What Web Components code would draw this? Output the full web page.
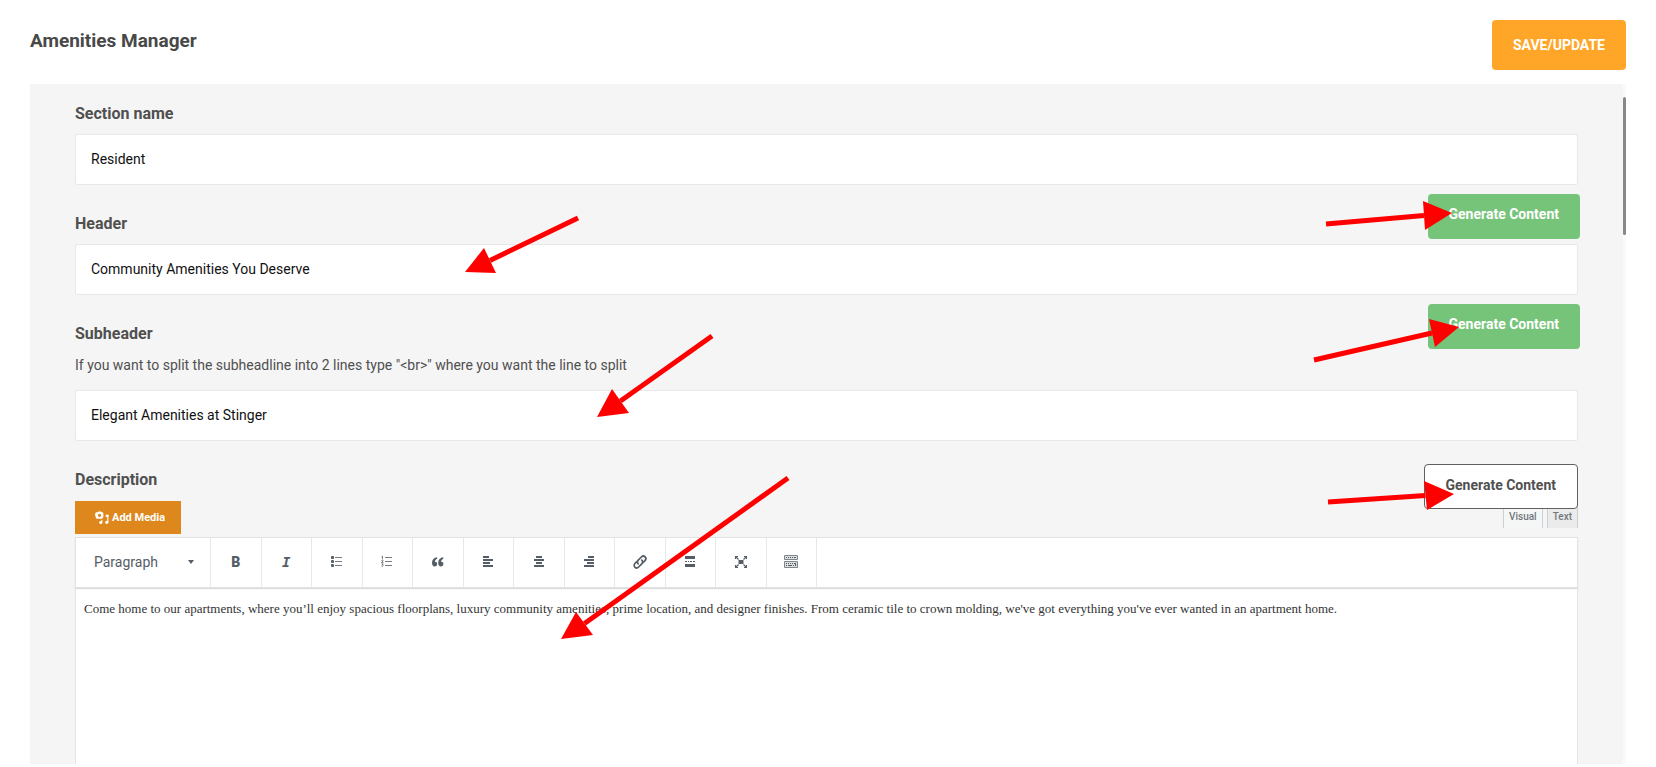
<!DOCTYPE html>
<html lang="en">
<head>
<meta charset="utf-8">
<title>Amenities Manager</title>
<style>
  body {
    margin: 0;
    background: #fff;
    color: #505050;
    font: 14px/20px Roboto, "Liberation Sans", sans-serif;
  }
</style>
</head>
<body>
<amenities-page></amenities-page>

<script>
const ICONS = {
  ul: `<g fill="currentColor"><rect x="4" y="4" width="3" height="3" rx="1"/><rect x="4" y="8" width="3" height="3" rx="1"/><rect x="4" y="12" width="3" height="3" rx="1"/>
    <path opacity=".8" d="M8 5h7v1H8zM8 9h7v1H8zM8 13h7v1H8z"/></g>`,
  ol: `<path fill="currentColor" opacity=".8" d="M8 5h7v1H8zM8 9h7v1H8zM8 13h7v1H8z"/>
    <path fill="none" stroke="currentColor" stroke-width=".8" d="M4.5 4.8l1-.6v3M4.5 8.6c.2-.7 1.8-.7 1.6.2L4.5 10.6h2M4.5 12h1.7l-.8 1c1.2.2.9 1.6-.9 1.3"/>`,
  quote: `<path fill="currentColor" d="M9 5.2C6 5.500 4 7.500 4 10.800c0 2.200 1 3.700 2.700 3.700 1.500 0 2.500-1 2.500-2.500 0-1.400-.9-2.300-2.300-2.300.1-1.300.9-2.400 2.300-3zM15.200 5.200c-3 .3-5 2.300-5 5.600 0 2.200 1 3.700 2.700 3.700 1.500 0 2.500-1 2.500-2.500 0-1.400-.9-2.300-2.300-2.300.1-1.300.9-2.400 2.300-3z"/>`,
  left: `<path fill="currentColor" d="M5 4h6v2H5zM5 7h10v2H5zM5 10h7v2H5zM5 13h10v2H5z"/>`,
  center: `<path fill="currentColor" d="M7 4h6v2H7zM5 7h10v2H5zM7 10h6v2H7zM5 13h10v2H5z"/>`,
  right: `<path fill="currentColor" d="M9 4h6v2H9zM5 7h10v2H5zM8 10h7v2H8zM5 13h10v2H5z"/>`,
  link: `<g fill="none" stroke="currentColor" stroke-width="1.700" stroke-linecap="round"><path d="M8.200 11.800c-1.100-1.100-1.100-2.500 0-3.600l3.200-3.200c1.100-1.100 2.700-1.100 3.700-.1s1 2.600-.1 3.700l-1.800 1.800"/><path d="M11.800 8.200c1.100 1.100 1.100 2.500 0 3.600l-3.200 3.200c-1.100 1.100-2.700 1.100-3.700.1s-1-2.600.1-3.700l1.800-1.800"/></g>`,
  more: `<path fill="currentColor" d="M5 4h10v3H5zM5 12h10v3H5zM5 9h2v1H5zM8 9h1v1H8zM10 9h2v1h-2zM13 9h2v1h-2z"/>`,
  full: `<path fill="currentColor" d="M7.500 8h5v4h-5z"/><path fill="none" stroke="currentColor" stroke-width="1.100" d="M4.500 7v-2.500h2.500M4.500 4.500L7.500 7.500M13 4.500h2.500V7M15.500 4.500L12.500 7.500M4.500 13v2.500H7M4.500 15.500L7.500 12.500M15.500 13v2.500H13M15.500 15.500L12.500 12.500"/>`,
  kitchen: `<g fill="#dcdee0" stroke="#80868d"><path d="M3.500 3.500h13v4h-13zM3.500 9.500h13v6h-13z"/></g>
    <path fill="currentColor" d="M5 5h1v1H5zM7 5h1v1H7zM9 5h1v1H9zM11 5h1v1h-1zM13 5h2v1h-2zM5 11h1v1H5zM7 11h1v1H7zM9 11h1v1H9zM11 11h1v1h-1zM13 11h1v1h-1zM14 11h1v3h-1zM5 13h1v1H5zM7 13h4v1H7zM12 13h1v1h-1z"/>`,
  media: `<path fill="currentColor" fill-rule="evenodd" d="M4.500 2.500l.7-1h3.200l.8 1h1.300l.7 1.500v4.500L9.800 10l-1 .5H3.500L2 9.500V8L1.200 7V4l1.100-1.500zM6.500 4.200a2 2 0 100 4 2 2 0 000-4z"/>
    <circle cx="8" cy="15" r="1.900" fill="currentColor"/><path fill="currentColor" d="M8.600 11.500h1.300V15H8.600z"/>
    <path fill="currentColor" d="M12.500 6l4.800-.6v2.400l-3.300.5V6z"/><path fill="currentColor" d="M15.900 6h1.400v8.500h-1.400z"/><circle cx="15.300" cy="14.700" r="2" fill="currentColor"/>`
};

class AppButton extends HTMLElement {
  constructor() {
    super();
    this.attachShadow({ mode: "open" });
    this.shadowRoot.innerHTML = `
    <style>
      :host {
        display: block;
        flex: none;
      }
      button {
        display: block;
        box-sizing: border-box;
        border: 0;
        border-radius: 4px;
        padding: 15px 21px;
        background: #ffa629;
        color: #fff;
        font: 700 14px/20px Roboto, "Liberation Sans", sans-serif;
        cursor: pointer;
      }
      :host([kind="generate"]) button {
        padding: 10px 21px 15px;
        background: #76c47a;
      }
      :host([kind="outline"]) button {
        border: 1px solid #606060;
        padding: 10px 21px 13px;
        background: #fff;
        color: #505050;
      }
    </style>
    <button type="button"><slot></slot></button>
    `;
  }
}
customElements.define("app-button", AppButton);

class TextField extends HTMLElement {
  constructor() {
    super();
    this.attachShadow({ mode: "open" });
  }

  connectedCallback() {
    this.shadowRoot.innerHTML = `
    <style>
      :host {
        display: block;
        margin-bottom: 29px;
      }
      .head {
        display: flex;
        justify-content: space-between;
        align-items: flex-start;
        height: 20px;
        margin-bottom: 10px;
      }
      label {
        font-size: 16px;
        font-weight: 700;
      }
      /* the button is taller than the label row and hangs over its edges */
      ::slotted(app-button) {
        margin: -20px -2px 0 0;
      }
      ::slotted(p) {
        margin: 0 0 14px;
        line-height: 22px;
      }
      input {
        display: block;
        box-sizing: border-box;
        width: 100%;
        height: 51px;
        padding: 0 15px 2px;
        border: 1px solid #e8e8e8;
        border-radius: 2px;
        background: #fff;
        color: #111;
        font: inherit;
      }
    </style>
    <div class="head"><label for="field"></label><slot name="action"></slot></div>
    <slot></slot>
    <input id="field" type="text">
    `;
    this.shadowRoot.querySelector("label").textContent = this.getAttribute("label");
    this.shadowRoot.querySelector("input").value = this.getAttribute("value");
  }
}
customElements.define("text-field", TextField);

class ToolButton extends HTMLElement {
  constructor() {
    super();
    this.attachShadow({ mode: "open" });
  }

  connectedCallback() {
    const icon = this.getAttribute("icon");
    this.shadowRoot.innerHTML = `
    <style>
      :host {
        display: flex;
        border-right: 1px solid #e8e8e8;
      }
      button {
        flex: 1;
        display: flex;
        align-items: center;
        justify-content: center;
        padding: 0 0 2px;
        border: 0;
        background: none;
        color: #555d66;
        font: 900 14px/20px Roboto, sans-serif;
      }
      svg {
        display: block;
        width: 20px;
        height: 20px;
      }
      ::slotted(i) {
        font: italic 700 14px/20px "DejaVu Sans Mono", monospace;
      }
    </style>
    <button type="button" aria-label="${this.title}">${
      icon ? `<svg viewBox="0 0 20 20">${ICONS[icon]}</svg>` : "<slot></slot>"
    }</button>
    `;
  }
}
customElements.define("tool-button", ToolButton);

class EditorToolbar extends HTMLElement {
  constructor() {
    super();
    this.attachShadow({ mode: "open" });
    this.shadowRoot.innerHTML = `
    <style>
      :host {
        position: relative;
        display: flex;
        box-sizing: border-box;
        height: 51px;
        border: 1px solid #e2e2e2;
        background: #fff;
        box-shadow: 0 1px 1px #ddd;
      }
      .format {
        display: flex;
        align-items: center;
        width: 134px;
        border-right: 1px solid #e8e8e8;
      }
      select {
        flex: 1;
        min-width: 0;
        height: 100%;
        padding: 0 18px 2px;
        border: 0;
        appearance: none;
        background: none;
        color: #555d66;
        font: 14px/20px Roboto, "Liberation Sans", sans-serif;
      }
      .format svg {
        width: 6px;
        height: 4px;
        margin: 0 16px 2px 0;
      }
      .tools {
        display: grid;
        grid-template-columns: repeat(12, 1fr);
        width: 606px;
      }
    </style>
    <div class="format">
      <select aria-label="Text format"><option>Paragraph</option></select>
      <svg viewBox="0 0 6 4"><path fill="#555d66" d="M0 0h6L3 4z"/></svg>
    </div>
    <div class="tools">
      <tool-button title="Bold">B</tool-button>
      <tool-button title="Italic"><i>I</i></tool-button>
      <tool-button title="Bulleted list" icon="ul"></tool-button>
      <tool-button title="Numbered list" icon="ol"></tool-button>
      <tool-button title="Blockquote" icon="quote"></tool-button>
      <tool-button title="Align left" icon="left"></tool-button>
      <tool-button title="Align center" icon="center"></tool-button>
      <tool-button title="Align right" icon="right"></tool-button>
      <tool-button title="Insert link" icon="link"></tool-button>
      <tool-button title="Read more" icon="more"></tool-button>
      <tool-button title="Fullscreen" icon="full"></tool-button>
      <tool-button title="Toolbar toggle" icon="kitchen"></tool-button>
    </div>
    `;
  }
}
customElements.define("editor-toolbar", EditorToolbar);

class RichEditor extends HTMLElement {
  constructor() {
    super();
    this.attachShadow({ mode: "open" });
    this.shadowRoot.innerHTML = `
    <style>
      :host {
        display: flex;
        flex-direction: column;
        flex: 1;
      }
      .head {
        display: flex;
        justify-content: space-between;
        align-items: flex-start;
        height: 20px;
        margin-bottom: 11px;
      }
      label {
        font-size: 16px;
        font-weight: 700;
      }
      app-button {
        position: relative;
        z-index: 1;
        margin-top: -6px;
      }
      .bar {
        display: flex;
        justify-content: space-between;
        align-items: flex-start;
        margin-bottom: 3px;
      }
      .media {
        display: flex;
        align-items: center;
        gap: 3px;
        height: 33px;
        padding: 0 16px 0 20px;
        border: 0;
        background: #dd871c;
        color: #fff;
        font: 700 11px/20px Roboto, "Liberation Sans", sans-serif;
      }
      .media svg {
        width: 14px;
        height: 14px;
      }
      .tabs {
        display: flex;
        gap: 4px;
      }
      .tabs button {
        height: 27px;
        padding: 10px 5px 5px;
        border: 1px solid #ccd0d4;
        border-width: 0 1px;
        background: #ebebeb;
        color: #72777c;
        font: 500 10px/12px Roboto, "Liberation Sans", sans-serif;
      }
      .tabs .active {
        background: #f5f6f6;
      }
      textarea {
        flex: 1;
        box-sizing: border-box;
        width: 100%;
        padding: 11px 8px;
        border: 1px solid #e5e5e5;
        border-width: 0 1px;
        outline: 0;
        resize: none;
        background: #fff;
        color: #333;
        font: 13px/20px "Liberation Serif", "Times New Roman", serif;
      }
    </style>
    <div class="head">
      <label for="content">Description</label>
      <app-button kind="outline">Generate Content</app-button>
    </div>
    <div class="bar">
      <button type="button" class="media"><svg viewBox="1 1 17 17">${ICONS.media}</svg>Add Media</button>
      <div class="tabs">
        <button type="button" class="active">Visual</button>
        <button type="button">Text</button>
      </div>
    </div>
    <editor-toolbar></editor-toolbar>
    <textarea id="content" spellcheck="false">Come home to our apartments, where you’ll enjoy spacious floorplans, luxury community amenities, prime location, and designer finishes. From ceramic tile to crown molding, we've got everything you've ever wanted in an apartment home.</textarea>
    `;
  }
}
customElements.define("rich-editor", RichEditor);

// Red callout arrows, each given by its tail, its tip and the two back corners of the head
class CalloutArrows extends HTMLElement {
  constructor() {
    super();
    const arrows = [
      [578, 218, 465, 272, 484, 248, 496, 273],
      [712, 336, 597, 417, 612, 389, 629, 413],
      [788, 478, 561, 639, 576, 612, 593, 635],
      [1326, 224, 1452, 213, 1423, 201, 1425, 230],
      [1314, 360, 1459, 327, 1429, 319, 1435, 347],
      [1328, 502, 1454, 494, 1424, 481, 1427, 510],
    ];
    this.attachShadow({ mode: "open" });
    this.shadowRoot.innerHTML = `
    <style>
      :host {
        position: absolute;
        inset: 0;
        z-index: 2;
        overflow: hidden;
        pointer-events: none;
      }
      svg {
        display: block;
        width: 100%;
        height: 100%;
      }
    </style>
    <svg aria-hidden="true" fill="red" stroke="red">${arrows
      .map(
        ([x, y, tx, ty, ax, ay, bx, by]) => `
      <path stroke-width="5" d="M${x} ${y}L${(ax + bx) / 2} ${(ay + by) / 2}"/>
      <path stroke="none" d="M${tx} ${ty}L${ax} ${ay}L${bx} ${by}z"/>`
      )
      .join("")}
    </svg>
    `;
  }
}
customElements.define("callout-arrows", CalloutArrows);

class AmenitiesPage extends HTMLElement {
  constructor() {
    super();
    this.attachShadow({ mode: "open" });
    this.shadowRoot.innerHTML = `
    <style>
      :host {
        position: relative;
        display: flex;
        flex-direction: column;
        box-sizing: border-box;
        height: 100vh;
        padding: 20px 30px 3px;
      }
      header {
        display: flex;
        justify-content: space-between;
        align-items: flex-start;
        margin-bottom: 14px;
      }
      h1 {
        margin: 7px 0 0;
        font-size: 19px;
        line-height: 28px;
        font-weight: 700;
        color: #484848;
      }
      .panel {
        flex: 1;
        min-height: 0;
        display: flex;
        background: #f5f5f5;
      }
      main {
        flex: 1;
        display: flex;
        flex-direction: column;
        min-width: 0;
        padding: 20px 45px 0;
        overflow: auto;
        scrollbar-width: none;
      }
      .track {
        width: 3px;
        padding-top: 13px;
        background: #fafafa;
      }
      .thumb {
        height: 138px;
        border-radius: 2px;
        background: #888;
      }
    </style>
    <header>
      <h1>Amenities Manager</h1>
      <app-button>SAVE/UPDATE</app-button>
    </header>
    <div class="panel">
      <main>
        <text-field label="Section name" value="Resident"></text-field>
        <text-field label="Header" value="Community Amenities You Deserve">
          <app-button slot="action" kind="generate">Generate Content</app-button>
        </text-field>
        <text-field label="Subheader" value="Elegant Amenities at Stinger">
          <app-button slot="action" kind="generate">Generate Content</app-button>
          <p>If you want to split the subheadline into 2 lines type "&lt;br&gt;" where you want the line to split</p>
        </text-field>
        <rich-editor></rich-editor>
      </main>
      <div class="track"><div class="thumb"></div></div>
    </div>
    <callout-arrows></callout-arrows>
    `;
  }
}
customElements.define("amenities-page", AmenitiesPage);
</script>
</body>
</html>
